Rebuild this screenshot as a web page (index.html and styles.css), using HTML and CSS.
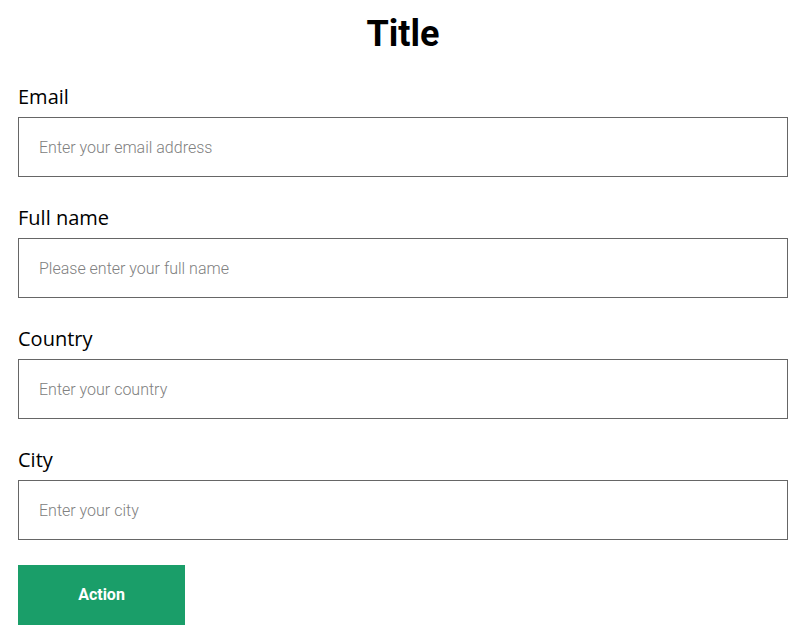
FILE: index.html
```html
<!DOCTYPE html>
<html>
<head>
<meta charset="utf-8">
<link rel="stylesheet" href="styles.css">
</head>
<body>
<div class="page">
  <h1 class="title">Title</h1>
  <form class="form">
    <div class="field">
      <label class="label" for="email">Email</label>
      <input class="input" id="email" type="text" placeholder="Enter your email address">
    </div>
    <div class="field">
      <label class="label" for="name">Full name</label>
      <input class="input" id="name" type="text" placeholder="Please enter your full name">
    </div>
    <div class="field">
      <label class="label" for="country">Country</label>
      <input class="input" id="country" type="text" placeholder="Enter your country">
    </div>
    <div class="field">
      <label class="label" for="city">City</label>
      <input class="input" id="city" type="text" placeholder="Enter your city">
    </div>
    <button class="button" type="button">Action</button>
  </form>
</div>
</body>
</html>
```

FILE: styles.css
```css
html, body {
  margin: 0;
  padding: 0;
  background: #ffffff;
}
.page {
  width: 770px;
  padding: 11px 14px 0 18px;
}
.title {
  margin: 0 0 26px 0;
  font-family: Roboto, "Liberation Sans", sans-serif;
  font-weight: 700;
  font-size: 36px;
  line-height: 46px;
  text-align: center;
  color: #000000;
}
.form {
  display: flex;
  flex-direction: column;
  gap: 27px;
}
.field {
  display: flex;
  flex-direction: column;
  gap: 7px;
}
.label {
  font-family: "Open Sans", "Liberation Sans", sans-serif;
  font-size: 20px;
  line-height: 27px;
  color: #000000;
}
.input {
  box-sizing: border-box;
  width: 770px;
  height: 60px;
  margin: 0;
  padding: 0 20px;
  border: 1px solid #666666;
  border-radius: 0;
  outline: none;
  font-family: Roboto, "Liberation Sans", sans-serif;
  font-weight: 300;
  font-size: 16px;
  color: #222222;
  background: #ffffff;
}
.input::placeholder {
  color: #808080;
  opacity: 1;
}
.button {
  margin-top: -2px;
  width: 167px;
  height: 60px;
  padding: 0 0 2px 0;
  border: none;
  border-radius: 0;
  background: #1a9e69;
  color: #ffffff;
  font-family: Roboto, "Liberation Sans", sans-serif;
  font-weight: 700;
  font-size: 16px;
  cursor: pointer;
}
```
